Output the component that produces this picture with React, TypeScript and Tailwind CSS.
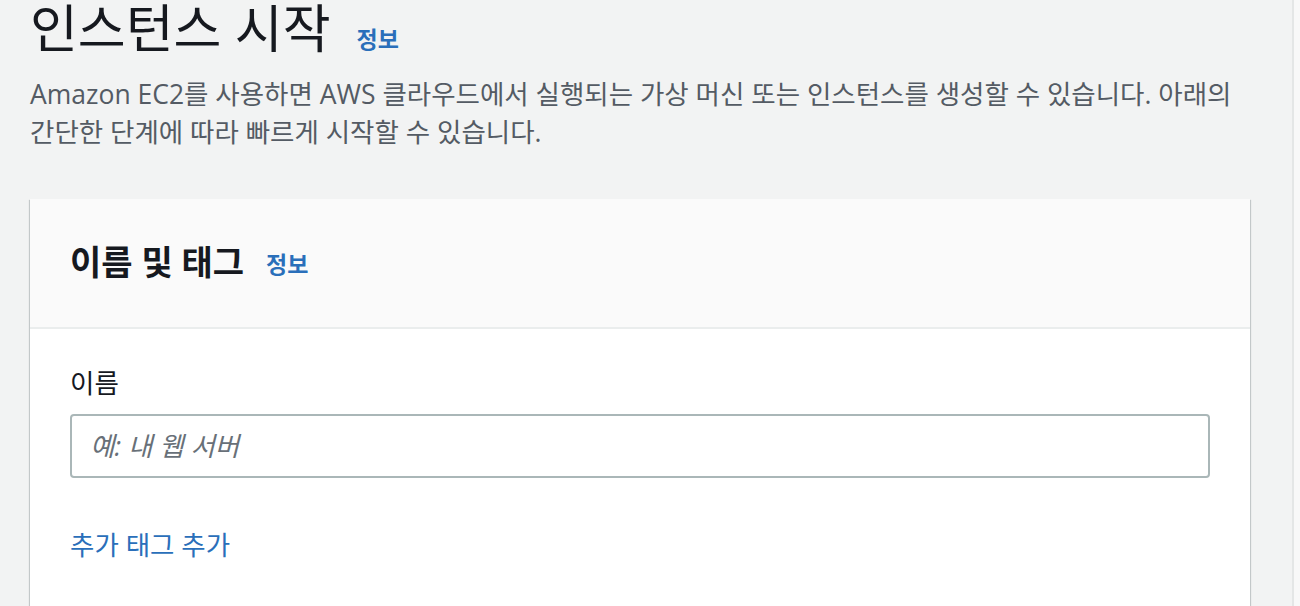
export default function App() {
  const font = { fontFamily: '"Open Sans", "Noto Sans CJK KR", sans-serif' };
  return (
    <div className="flex h-[606px] w-full overflow-hidden bg-[#f2f3f3]" style={font}>
      <div className="flex-1 min-w-0 pl-[30px] pr-[42px]">
        {/* Page header */}
        <div className="flex items-baseline gap-[26px]">
          <h1 className="text-[52px] leading-[56px] font-normal text-[#16191f]">인스턴스 시작</h1>
          <a className="text-[23px] font-bold text-[#2a6fba]">정보</a>
        </div>
        <p className="mt-[18px] text-[26.5px] leading-[38px] text-[#545b64] whitespace-nowrap">
          Amazon EC2를 사용하면 AWS 클라우드에서 실행되는 가상 머신 또는 인스턴스를 생성할 수 있습니다. 아래의
          <br />
          간단한 단계에 따라 빠르게 시작할 수 있습니다.
        </p>

        {/* Card */}
        <div className="mt-[48px] bg-white shadow-[0_1px_1px_0_rgba(0,28,36,0.3),1px_1px_1px_0_rgba(0,28,36,0.15),-1px_1px_1px_0_rgba(0,28,36,0.15)]">
          <div className="h-[130px] flex items-center gap-[22px] px-[40px] bg-[#fafafa] border-b-2 border-[#eaeded]">
            <h2 className="text-[34px] font-bold text-[#16191f]">이름 및 태그</h2>
            <a className="text-[23px] font-bold text-[#2a6fba] mt-[4px]">정보</a>
          </div>
          <div className="px-[40px] pt-[35px] pb-[80px]">
            <label className="block text-[26.5px] leading-[38px] text-[#16191f]">이름</label>
            <input
              className="mt-[12px] w-full h-[64px] rounded-[4px] border-2 border-[#aab7b8] px-[18px] text-[26.5px] italic text-[#16191f] placeholder:text-[#687078] outline-none"
              placeholder="예: 내 웹 서버"
            />
            <a className="block mt-[48px] text-[26.5px] leading-[38px] text-[#2a6fba]">추가 태그 추가</a>
          </div>
        </div>
      </div>
      <div className="w-[8px] border-l-2 border-[#e4e6e6] bg-[#f8f8f8]" />
    </div>
  );
}
